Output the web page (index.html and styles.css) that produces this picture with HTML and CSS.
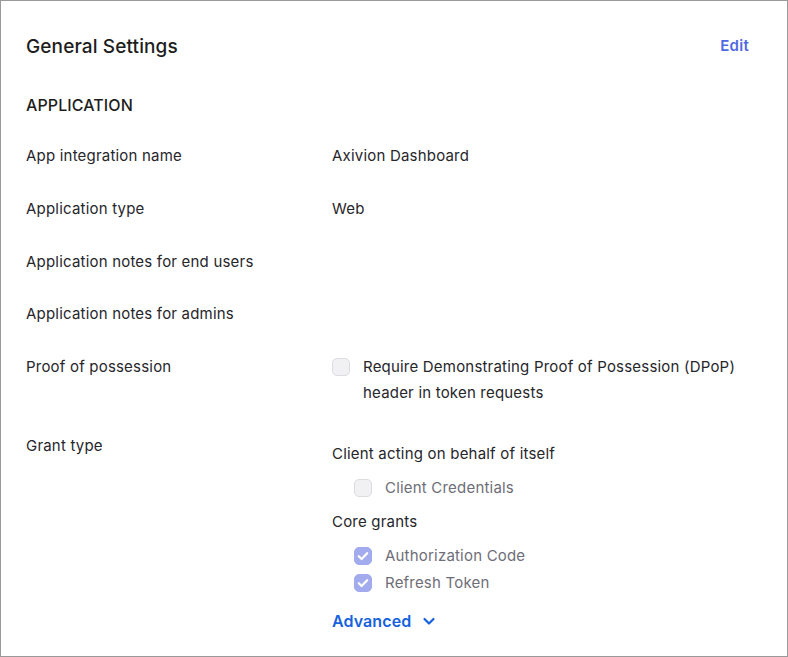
FILE: index.html
```html
<!DOCTYPE html>
<html lang="en">
<head>
  <meta charset="UTF-8" />
  <meta name="viewport" content="width=device-width, initial-scale=1.0"/>
  <title>General Settings</title>
  <link rel="stylesheet" href="styles.css">
</head>
<body>
  <section class="card">
    <header class="card-header">
      <h2 class="card-title">General Settings</h2>
      <button class="edit-btn">Edit</button>
    </header>

    <h3 class="section-title">APPLICATION</h3>

    <dl class="fields">
      <dt>App integration name</dt>
      <dd>Axivion Dashboard</dd>

      <dt>Application type</dt>
      <dd>Web</dd>

      <dt>Application notes for end users</dt>
      <dd></dd>

      <dt class="tight">Application notes for admins</dt>
      <dd></dd>

      <dt>Proof of possession</dt>
      <dd>
        <label class="check">
          <span class="box"></span>
          <span>Require Demonstrating Proof of Possession (DPoP) header in token requests</span>
        </label>
      </dd>

      <dt>Grant type</dt>
      <dd class="grants">
        <div class="group-title">Client acting on behalf of itself</div>
        <label class="check option">
          <span class="box"></span>
          <span>Client Credentials</span>
        </label>

        <div class="group-title">Core grants</div>
        <div class="options">
          <label class="check option">
            <span class="box checked">
              <svg viewBox="0 0 16 16" width="14" height="14"><path d="M3.2 8.3l3.2 3.1 6.4-6.6" fill="none" stroke="#fff" stroke-width="2.6" stroke-linecap="round" stroke-linejoin="round"/></svg>
            </span>
            <span>Authorization Code</span>
          </label>
          <label class="check option">
            <span class="box checked">
              <svg viewBox="0 0 16 16" width="14" height="14"><path d="M3.2 8.3l3.2 3.1 6.4-6.6" fill="none" stroke="#fff" stroke-width="2.6" stroke-linecap="round" stroke-linejoin="round"/></svg>
            </span>
            <span>Refresh Token</span>
          </label>
        </div>

        <button class="advanced-btn">
          Advanced
          <svg viewBox="0 0 16 16" width="16" height="16"><path d="M3.5 6l4.5 4.5L12.5 6" fill="none" stroke="currentColor" stroke-width="2.2" stroke-linecap="round" stroke-linejoin="round"/></svg>
        </button>
      </dd>
    </dl>
  </section>
</body>
</html>
```

FILE: styles.css
```css
body {
  margin: 0;
  font-family: 'Inter', 'Noto Sans', sans-serif;
  color: #26262b;
  background: #fff;
}

.card {
  box-sizing: border-box;
  width: 788px;
  height: 657px;
  border: 1px solid #999;
  padding: 32px 38px 0 25px;
}

.card-header {
  display: flex;
  justify-content: space-between;
  align-items: center;
  height: 28px;
}

.card-title {
  margin: 0;
  font-size: 19px;
  font-weight: 500;
  line-height: 28px;
  letter-spacing: 0.12px;
  color: #1d1d21;
}

.edit-btn {
  margin-top: -3px;
  border: none;
  background: none;
  padding: 0;
  font-family: inherit;
  font-size: 15px;
  font-weight: 600;
  letter-spacing: 0.3px;
  color: #5067e3;
  cursor: pointer;
}

.section-title {
  margin: 32px 0 26px;
  font-size: 16px;
  font-weight: 500;
  line-height: 24px;
  letter-spacing: 0.1px;
  color: #1d1d21;
}

.fields {
  display: grid;
  grid-template-columns: 306px 1fr;
  row-gap: 27px;
  margin: 0;
  font-size: 15px;
  line-height: 26px;
  letter-spacing: 0.2px;
}

.fields dt,
.fields dd {
  margin: 0;
}

.fields dt.tight {
  margin-top: -1px;
}

.check {
  display: flex;
  align-items: flex-start;
  gap: 13px;
}

.box {
  flex: none;
  box-sizing: border-box;
  width: 18px;
  height: 18px;
  margin-top: 4px;
  border: 1px solid #dcdce0;
  border-radius: 5px;
  background: #f1f1f3;
  display: flex;
  align-items: center;
  justify-content: center;
}

.box.checked {
  border-color: #a3abef;
  background: #a3abef;
}

.grants {
  padding-top: 8px;
}

.option {
  margin: 8px 0 8px 22px;
  color: #6e6e78;
}

.group-title {
  line-height: 26px;
}

.options .option {
  margin: 0 0 1px 22px;
}

.options {
  margin-top: 8px;
}

.advanced-btn {
  display: flex;
  align-items: center;
  gap: 10px;
  margin-top: 13px;
  border: none;
  background: none;
  padding: 0;
  font-family: inherit;
  font-size: 16px;
  font-weight: 600;
  line-height: 24px;
  letter-spacing: 0.1px;
  color: #1662dd;
  cursor: pointer;
}
```
